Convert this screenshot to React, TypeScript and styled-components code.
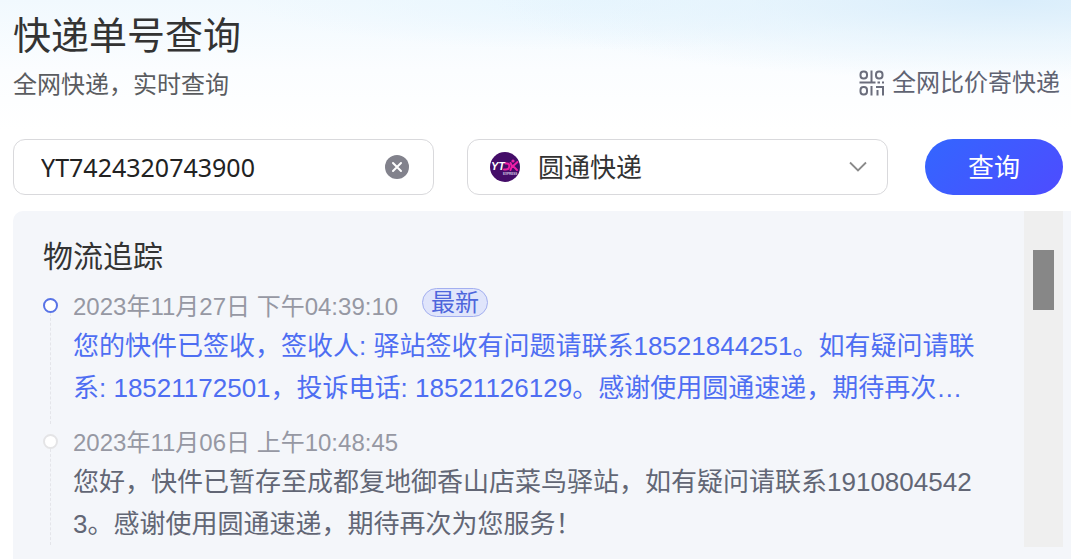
import React from 'react';
import styled, { createGlobalStyle } from 'styled-components';

const GlobalStyle = createGlobalStyle`
  * { box-sizing: border-box; }
  body {
    margin: 0;
    background: #fff;
    font-family: "Liberation Sans", "Noto Sans CJK SC", sans-serif;
    color: #333;
  }
  h1, h2, p, ol, time { margin: 0; padding: 0; font-weight: 400; }
`;

const Page = styled.main`
  display: flex;
  flex-direction: column;
  min-height: 100vh;
  padding-left: 13px;
  background:
    radial-gradient(ellipse 48% 80px at 94% 0, #d9edfb 0, rgba(226, 242, 252, 0.6) 50%, rgba(255, 255, 255, 0) 100%),
    radial-gradient(ellipse 32% 50px at 55% 0, #e8f6fe 0, rgba(255, 255, 255, 0) 100%),
    linear-gradient(180deg, #f1f9fe 0, #fbfdff 70px, #fff 130px);
`;

const Header = styled.header`
  display: flex;
  justify-content: space-between;
  align-items: flex-end;
  padding: 8px 11px 0 0;
`;

const Title = styled.h1`
  font-size: 38px;
  line-height: 56px;
`;

const Subtitle = styled.p`
  font-size: 24px;
  line-height: 42px;
  color: #5a5c60;
`;

const CompareLink = styled.a`
  display: flex;
  align-items: center;
  gap: 7px;
  padding-bottom: 2px;
  font-size: 24px;
  line-height: 42px;
  color: #5f6372;
  text-decoration: none;
`;

const Form = styled.form`
  display: flex;
  align-items: center;
  padding: 33px 8px 16px 0;
`;

const Field = styled.div<{ $gap: number }>`
  display: flex;
  flex: 1;
  align-items: center;
  min-width: 0;
  height: 56px;
  margin-right: ${(p) => p.$gap}px;
  padding: 0 20px 0 22px;
  border: 1px solid #d9d9dc;
  border-radius: 12px;
  background: #fff;
`;

const NumberInput = styled.input`
  flex: 1;
  min-width: 0;
  padding: 0 5px;
  border: 0;
  outline: 0;
  background: transparent;
  font-family: "Noto Sans", "Noto Sans CJK SC", sans-serif;
  font-size: 25px;
  color: #222;
`;

const ClearButton = styled.button`
  display: flex;
  padding: 0;
  margin-right: 4px;
  border: 0;
  background: none;
`;

const CourierSelect = styled.select`
  flex: 1;
  min-width: 0;
  height: 42px;
  padding: 2px 0 0;
  margin-left: 18px;
  border: 0;
  outline: 0;
  appearance: none;
  background: transparent;
  font-family: inherit;
  font-size: 26px;
  line-height: 40px;
  color: #333;
`;

const SubmitButton = styled.button`
  width: 138px;
  height: 56px;
  padding: 0 0 4px;
  border: 0;
  border-radius: 28px;
  background: linear-gradient(135deg, #3366ff 0%, #4e4cff 100%);
  font-family: inherit;
  font-size: 26px;
  color: #fff;
`;

const Panel = styled.section`
  display: flex;
  flex: 1;
  align-items: flex-start;
  padding-right: 8px;
  border-top-left-radius: 10px;
  background: #f4f6fa;
`;

const Tracking = styled.div`
  flex: 1;
  min-width: 0;
  padding: 24px 43px 0 30px;
`;

const PanelTitle = styled.h2`
  padding-bottom: 9px;
  font-size: 30px;
  line-height: 44px;
`;

const Timeline = styled.ol`
  list-style: none;
`;

const Step = styled.li`
  display: flex;
  gap: 15px;
`;

const Rail = styled.div`
  display: flex;
  flex-direction: column;
  align-items: center;
  width: 15px;
  padding-top: 10px;
`;

const Dot = styled.span<{ $active: boolean }>`
  width: 15px;
  height: 15px;
  border: 2px solid ${(p) => (p.$active ? '#5873e6' : '#e4e4e6')};
  border-radius: 50%;
  background: #fff;
`;

const Dashes = styled.span`
  flex: 1;
  border-left: 1px dashed #e4e5ea;
`;

const StepBody = styled.div<{ $last: boolean }>`
  flex: 1;
  min-width: 0;
  padding-bottom: ${(p) => (p.$last ? 0 : 15)}px;
`;

const StepHead = styled.div`
  display: flex;
  align-items: center;
  gap: 24px;
  height: 37px;
  padding-bottom: 4px;
  font-size: 24px;
  color: #9698a3;
`;

const Badge = styled.span`
  margin-bottom: 4px;
  padding: 0 8px;
  border: 1px solid #a3aff0;
  border-radius: 15px;
  background: #e0e5fb;
  line-height: 27px;
  color: #4e66dc;
`;

const Message = styled.p<{ $active: boolean }>`
  font-size: 26px;
  line-height: 42px;
  word-break: break-all;
  color: ${(p) => (p.$active ? '#4e6ef2' : '#626675')};
`;

const ScrollTrack = styled.div`
  width: 39px;
  height: 336px;
  padding: 39px 9px 0;
  background: #efefef;
`;

const ScrollThumb = styled.div`
  height: 60px;
  background: #878787;
`;

const QrIcon = () => (
  <svg width="26" height="26" viewBox="0 0 26 26" fill="none" stroke="#6a6d7c" strokeWidth="2" aria-hidden="true">
    <rect x="1.5" y="1.5" width="6.5" height="7" rx="3" />
    <rect x="17" y="1.5" width="6.5" height="7" rx="3" />
    <rect x="1.5" y="17" width="6.5" height="7.5" rx="3" />
    <path d="M12.5 0.5v12M0.5 12.5h16M18.5 12.5h2.5M23 12.5h2M12.5 16v9.5M17 17h8M18.5 20v5.5M24 17v8.5" />
  </svg>
);

const ClearIcon = () => (
  <svg width="24" height="24" viewBox="0 0 24 24" aria-hidden="true">
    <circle cx="12" cy="12" r="12" fill="#82828c" />
    <path d="M8 8l8 8M16 8l-8 8" stroke="#fff" strokeWidth="2" strokeLinecap="round" />
  </svg>
);

const CourierLogo = () => (
  <svg width="30" height="30" viewBox="0 0 30 30" aria-hidden="true">
    <circle cx="15" cy="15" r="15" fill="#440d68" />
    <text x="1" y="18" fontFamily="Liberation Sans, sans-serif" fontSize="11" fontWeight="700" fontStyle="italic" fill="#fff">YT</text>
    <g fill="none" stroke="#ee1fa6" strokeWidth="2" strokeLinecap="round">
      <path d="M15.5 11.5h1.500c3.500 0 3 6-1 6h-2" />
      <path d="M20.500 11l1.500 3l-1.500 4M27.500 10l-4.500 4l4 4" />
    </g>
    <circle cx="23" cy="9" r="1.600" fill="#ee1fa6" />
    <text x="13" y="22.5" fontFamily="Liberation Sans, sans-serif" fontSize="3" fontWeight="700" fill="#d9c4e4">EXPRESS</text>
  </svg>
);

const ChevronIcon = () => (
  <svg width="18" height="12" viewBox="0 0 18 12" fill="none" stroke="#8a8a8a" strokeWidth="1.8" aria-hidden="true">
    <path d="M1 1.5l8 8 8-8" />
  </svg>
);

const steps = [
  {
    time: '2023年11月27日 下午04:39:10',
    latest: true,
    text: '您的快件已签收，签收人: 驿站签收有问题请联系18521844251。如有疑问请联系: 18521172501，投诉电话: 18521126129。感谢使用圆通速递，期待再次…',
  },
  {
    time: '2023年11月06日 上午10:48:45',
    latest: false,
    text: '您好，快件已暂存至成都复地御香山店菜鸟驿站，如有疑问请联系19108045423。感谢使用圆通速递，期待再次为您服务！',
  },
];

export default function App() {
  const [number, setNumber] = React.useState('YT7424320743900');
  return (
    <Page>
      <GlobalStyle />
      <Header>
        <div>
          <Title>快递单号查询</Title>
          <Subtitle>全网快递，实时查询</Subtitle>
        </div>
        <CompareLink href="#compare">
          <QrIcon />
          全网比价寄快递
        </CompareLink>
      </Header>
      <Form onSubmit={(e) => e.preventDefault()}>
        <Field $gap={33}>
          <NumberInput aria-label="快递单号" value={number} onChange={(e) => setNumber(e.target.value)} />
          <ClearButton type="button" aria-label="清空" onClick={() => setNumber('')}>
            <ClearIcon />
          </ClearButton>
        </Field>
        <Field $gap={37}>
          <CourierLogo />
          <CourierSelect aria-label="快递公司" defaultValue="yto">
            <option value="yto">圆通快递</option>
          </CourierSelect>
          <ChevronIcon />
        </Field>
        <SubmitButton type="submit">查询</SubmitButton>
      </Form>
      <Panel>
        <Tracking>
          <PanelTitle>物流追踪</PanelTitle>
          <Timeline>
            {steps.map((step, i) => (
              <Step key={step.time}>
                <Rail>
                  <Dot $active={step.latest} />
                  <Dashes />
                </Rail>
                <StepBody $last={i === steps.length - 1}>
                  <StepHead>
                    <time>{step.time}</time>
                    {step.latest && <Badge>最新</Badge>}
                  </StepHead>
                  <Message $active={step.latest}>{step.text}</Message>
                </StepBody>
              </Step>
            ))}
          </Timeline>
        </Tracking>
        <ScrollTrack>
          <ScrollThumb />
        </ScrollTrack>
      </Panel>
    </Page>
  );
}
